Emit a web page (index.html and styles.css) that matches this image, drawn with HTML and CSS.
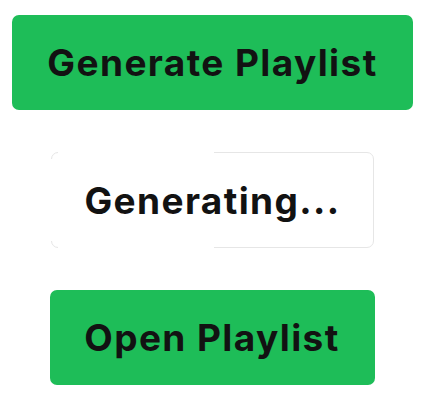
FILE: index.html
```html
<!DOCTYPE html>
<html>
<head>
<meta charset="utf-8">
<link rel="stylesheet" href="styles.css">
</head>
<body>
<div class="stack">
  <button class="btn btn-green btn-wide">Generate Playlist</button>
  <button class="btn btn-loading"><span class="label">Generating...</span></button>
  <button class="btn btn-green btn-open">Open Playlist</button>
</div>
</body>
</html>
```
FILE: styles.css
```css
html, body {
  margin: 0;
  padding: 0;
  background: #ffffff;
}
.stack {
  width: 425px;
  padding-top: 15px;
  display: flex;
  flex-direction: column;
  align-items: center;
  gap: 42px;
}
.btn {
  font-family: "Inter", "Liberation Sans", sans-serif;
  font-weight: 700;
  font-size: 37px;
  letter-spacing: 1.4px;
  font-feature-settings: "calt" 0;
  color: #121212;
  height: 95px;
  border-radius: 7px;
  border: none;
  display: flex;
  align-items: center;
  justify-content: center;
  padding: 0;
  margin: 0;
  box-sizing: border-box;
}
.btn-green {
  background: #1ebd58;
}
.btn-wide {
  width: 401px;
}
.btn-open {
  width: 325px;
  margin-left: -1px;
}
.btn-loading {
  width: 323px;
  height: 96px;
  background: #ffffff;
  border: 1px solid #e6e6e6;
  position: relative;
  margin-left: 0;
}
.btn-loading::before {
  content: "";
  position: absolute;
  left: -1px;
  top: 6px;
  bottom: 6px;
  width: 2px;
  background: #ffffff;
}
.btn-loading::after {
  content: "";
  position: absolute;
  left: 6px;
  top: -1px;
  bottom: -1px;
  width: 156px;
  background: #ffffff;
}
.btn-loading .label {
  position: relative;
  z-index: 1;
}
```
